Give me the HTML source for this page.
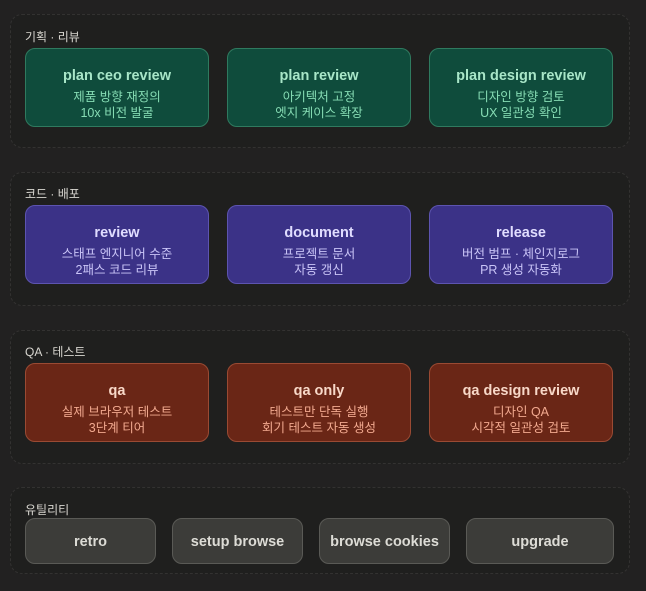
<!DOCTYPE html>
<html><head><meta charset="utf-8"><style>
*{margin:0;padding:0;box-sizing:border-box}
body{width:646px;height:591px;background:#222121;font-family:"Liberation Sans","Noto Sans CJK KR",sans-serif;position:relative;overflow:hidden}
.sec{position:absolute;left:10px;width:620px;border:1px dashed #333231;border-radius:12px;background:#1f1f1e}
.lbl{position:absolute;left:25px;font-size:12px;color:#d8d6d0;font-family:"Liberation Sans","Noto Sans CJK KR",sans-serif}
.card{position:absolute;width:184px;height:79px;border-radius:10px;border:1px solid;text-align:center;padding-top:18px}
.card b{display:block;font-size:14.5px;font-weight:bold;line-height:18px;margin-bottom:4px}
.card span{display:block;font-size:12.5px;line-height:16px;font-family:"Liberation Sans","Noto Sans CJK KR",sans-serif}
.g{background:#0f4c3c;border-color:#2f7a5f;color:#a8e6c8}.g span{color:#86dcb4}
.p{background:#3b3287;border-color:#5d54b0;color:#e0ddff}.p span{color:#c9c4f7}
.r{background:#6a2616;border-color:#9a4a33;color:#f8d8c8}.r span{color:#f2a98f}
.btn{position:absolute;top:518px;height:46px;border-radius:10px;background:#3c3c39;border:1px solid #5a5a56;color:#dddcd6;font-weight:bold;font-size:14.5px;text-align:center;line-height:47px}
</style></head><body>
<div class="sec" style="top:14px;height:134px"></div>
<div class="sec" style="top:172px;height:134px"></div>
<div class="sec" style="top:330px;height:134px"></div>
<div class="sec" style="top:487px;height:87px"></div>

<div class="lbl" style="top:28px">기획 · 리뷰</div>
<div class="card g" style="left:25px;top:48px"><b>plan ceo review</b><span>제품 방향 재정의</span><span>10x 비전 발굴</span></div>
<div class="card g" style="left:227px;top:48px"><b>plan review</b><span>아키텍처 고정</span><span>엣지 케이스 확장</span></div>
<div class="card g" style="left:429px;top:48px"><b>plan design review</b><span>디자인 방향 검토</span><span>UX 일관성 확인</span></div>

<div class="lbl" style="top:185px">코드 · 배포</div>
<div class="card p" style="left:25px;top:205px"><b>review</b><span>스태프 엔지니어 수준</span><span>2패스 코드 리뷰</span></div>
<div class="card p" style="left:227px;top:205px"><b>document</b><span>프로젝트 문서</span><span>자동 갱신</span></div>
<div class="card p" style="left:429px;top:205px"><b>release</b><span>버전 범프 · 체인지로그</span><span>PR 생성 자동화</span></div>

<div class="lbl" style="top:343px">QA · 테스트</div>
<div class="card r" style="left:25px;top:363px"><b>qa</b><span>실제 브라우저 테스트</span><span>3단계 티어</span></div>
<div class="card r" style="left:227px;top:363px"><b>qa only</b><span>테스트만 단독 실행</span><span>회기 테스트 자동 생성</span></div>
<div class="card r" style="left:429px;top:363px"><b>qa design review</b><span>디자인 QA</span><span>시각적 일관성 검토</span></div>

<div class="lbl" style="top:501px">유틸리티</div>
<div class="btn" style="left:25px;width:131px">retro</div>
<div class="btn" style="left:172px;width:131px">setup browse</div>
<div class="btn" style="left:319px;width:131px">browse cookies</div>
<div class="btn" style="left:466px;width:148px">upgrade</div>
</body></html>
